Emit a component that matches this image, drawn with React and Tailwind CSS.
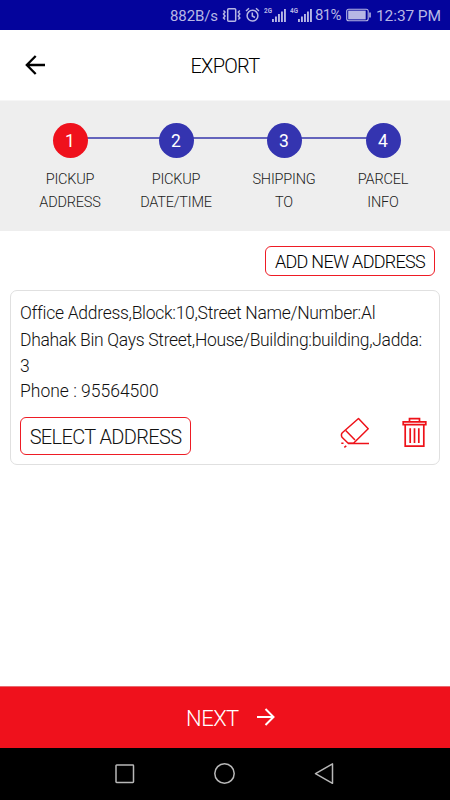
const steps = [
    { id: 1, lines: ['PICKUP', 'ADDRESS'], width: 'w-[106px]' },
    { id: 2, lines: ['PICKUP', 'DATE/TIME'], width: 'w-[106px]' },
    { id: 3, lines: ['SHIPPING', 'TO'], width: 'w-[110px]' },
    { id: 4, lines: ['PARCEL', 'INFO'], width: 'w-[88px]' },
]

function Signal({ label }) {
    return (
        <svg className="w-[24px] h-[18px] shrink-0" viewBox="0 0 24 18" fill="#b7b7e4">
            <text x="0" y="8" fontSize="7" fontWeight="700" fontFamily="Roboto, sans-serif" textLength="8" lengthAdjust="spacingAndGlyphs">{label}</text>
            <path d="M8 14h1.9v3H8zM11 11.5h1.9V17H11zM14 9h1.9v8H14zM17 6.5h1.9V17H17zM20 4h1.9v13H20z" />
        </svg>
    )
}

function StatusBar() {
    return (
        <div className="h-[30px] bg-[#04049c] text-[#b7b7e4] flex items-center text-[15px] font-normal leading-none pl-[170px] whitespace-nowrap">
            <span className="w-[52px] pt-[2px] tracking-[-0.1px]">882B/s</span>
            {/* Vibrate */}
            <svg className="w-[19px] h-[16px] shrink-0" viewBox="0 0 19 16" fill="none" stroke="currentColor" strokeWidth="1.5">
                <rect x="5.7" y="1.7" width="8" height="12.6" rx="1" />
                <path d="M1.5 3.5l1.5 1.5-1.5 2 1.5 2-1.5 2 1.5 1.5M17.8 3.5l-1.5 1.5 1.5 2-1.5 2 1.5 2-1.5 1.5" />
            </svg>
            {/* Alarm */}
            <svg className="w-[15px] h-[16px] shrink-0 ml-[4px]" viewBox="0 0 15 16" fill="none" stroke="currentColor" strokeWidth="1.5">
                <circle cx="7.5" cy="8.7" r="5.4" />
                <path d="M7.3 5.5v3.5l2.7 1.5M1 4l3-2.7M14 4l-3-2.7" />
            </svg>
            <div className="flex ml-[4px] gap-[2px] -mt-[2px]">
                <Signal label="2G" />
                <Signal label="4G" />
            </div>
            <span className="ml-[1px] w-[31px] tracking-[-0.7px]">81%</span>
            <svg className="w-[26px] h-[14px] shrink-0" viewBox="0 0 26 14">
                <rect x="0.7" y="1.2" width="21.5" height="11.6" rx="2" fill="none" stroke="currentColor" strokeWidth="1.1" />
                <rect x="2.2" y="2.6" width="17.5" height="8.8" fill="currentColor" />
                <path d="M24 4.5v5" stroke="currentColor" strokeWidth="1.6" />
            </svg>
            <span className="ml-[4px] pt-[3px] text-[15.5px] tracking-[-0.1px]">12:37 PM</span>
        </div>
    )
}

function Step({ step }) {
    return (
        <div className={`${step.width} shrink-0 flex flex-col items-center`}>
            <div className={`size-[35px] rounded-full flex items-center justify-center text-white text-[17.5px] font-normal pt-[2px] z-10 ${step.id === 1 ? 'bg-[#ef111c]' : 'bg-[#3434b0]'}`}>
                {step.id}
            </div>
            <div className="mt-[10px] text-[14.5px] leading-[23px] tracking-[-0.2px] text-center text-[#222]">
                {step.lines.map((line) => (
                    <div key={line}>{line}</div>
                ))}
            </div>
        </div>
    )
}

export default function App() {
    return (
        <div className="w-full h-[800px] flex flex-col bg-white font-['Roboto',sans-serif] font-light overflow-hidden">
            <StatusBar />

            <header className="h-[71px] grid grid-cols-[70px_1fr_70px] items-center border-b border-[#f6f6f6]">
                <svg className="w-[21px] h-[20px] ml-[25px]" viewBox="0 0 21 20" fill="none" stroke="#000" strokeWidth="2.3">
                    <path d="M20 10H2M10.7 1L1.8 10l8.9 9" />
                </svg>
                <h1 className="pt-[1px] text-center text-[20px] tracking-[-0.7px] text-black">EXPORT</h1>
            </header>

            <section className="h-[130px] bg-[#eee] pt-[22px] pl-[17px] relative">
                <div className="absolute left-[70px] right-[67px] top-[36px] h-[1.5px] bg-[#6464bc]" />
                <div className="flex relative">
                    {steps.map((step) => (
                        <Step key={step.id} step={step} />
                    ))}
                </div>
            </section>

            <main className="flex-1 px-[10px] pt-[15px]">
                <button className="block ml-auto mr-[5px] w-[170px] h-[30px] border-[1.5px] border-[#ee1c25] rounded-[6px] text-[18px] leading-[30px] tracking-[-0.7px] whitespace-nowrap">
                    ADD NEW ADDRESS
                </button>

                <div className="mt-[14px] h-[175px] border-[1.5px] border-[#e0e0e0] rounded-[7px] px-[9px] pt-[9px] text-[#111]">
                    <div className="text-[17.5px] leading-[27px] whitespace-nowrap">
                        <div className="tracking-[-0.29px]">Office Address,Block:10,Street Name/Number:Al</div>
                        <div className="tracking-[-0.32px]">Dhahak Bin Qays Street,House/Building:building,Jadda:</div>
                        <div className="leading-[25px]">3</div>
                        <div className="leading-[24px]">Phone : 95564500</div>
                    </div>
                    <div className="flex items-start mt-[14px]">
                        <button className="w-[171px] h-[38px] pt-[2px] border-[1.5px] border-[#ee1c25] rounded-[6px] text-[20px] tracking-[-0.65px] whitespace-nowrap">
                            SELECT ADDRESS
                        </button>
                        {/* Eraser */}
                        <svg className="w-[30px] h-[32px] ml-[149px]" viewBox="0 0 30 32" fill="none" stroke="#ee1118" strokeWidth="1.5" strokeLinejoin="round">
                            <path d="M18.5 1.5L28.2 11.8 13.5 26.3H8.2L2 20.2Q.7 17.5 2.3 15.7Z" />
                            <path d="M5.7 13.4L15 23M8 26.4h21M1.3 26.2h2.2M4.3 30.3l2-1.5" />
                        </svg>
                        {/* Trash */}
                        <svg className="w-[25px] h-[31px] ml-[32px]" viewBox="0 0 25 31" fill="none" stroke="#ee1118" strokeWidth="1.7">
                            <path d="M7.5 4.7V1.7h10v3M1.2 4.8h22.6v2.8H1.2zM3.2 7.6v21.6h18.6V7.6M8.2 11.3v14.6M12.5 11.3v14.6M16.8 11.3v14.6" />
                        </svg>
                    </div>
                </div>
            </main>

            <button className="h-[62px] shrink-0 bg-[#ef111c] border-t border-[#e86a70] text-white flex items-center pl-[186px] text-[22px]">
                <span className="w-[71px] pt-[1px] text-left tracking-[-0.5px]">NEXT</span>
                <svg className="w-[18px] h-[18px] -mt-[2px]" viewBox="0 0 18 18" fill="none" stroke="currentColor" strokeWidth="2">
                    <path d="M0 9h16M8.5 1l8 8-8 8" />
                </svg>
            </button>

            <nav className="h-[52px] shrink-0 bg-black flex items-center justify-center gap-[79px] pb-[2px] pr-[2px] text-[#b8b8b8]">
                <svg className="size-[21px]" viewBox="0 0 21 21" fill="none" stroke="currentColor" strokeWidth="1.5">
                    <rect x="2" y="2" width="17.5" height="17.5" rx=".7" />
                </svg>
                <svg className="size-[21px]" viewBox="0 0 21 21" fill="none" stroke="currentColor" strokeWidth="1.5">
                    <circle cx="10.5" cy="10.5" r="9.7" />
                </svg>
                <svg className="size-[21px]" viewBox="0 0 21 21" fill="none" stroke="currentColor" strokeWidth="1.5" strokeLinejoin="round">
                    <path d="M18.5.9v19.4L1.5 10.6z" />
                </svg>
            </nav>
        </div>
    )
}
